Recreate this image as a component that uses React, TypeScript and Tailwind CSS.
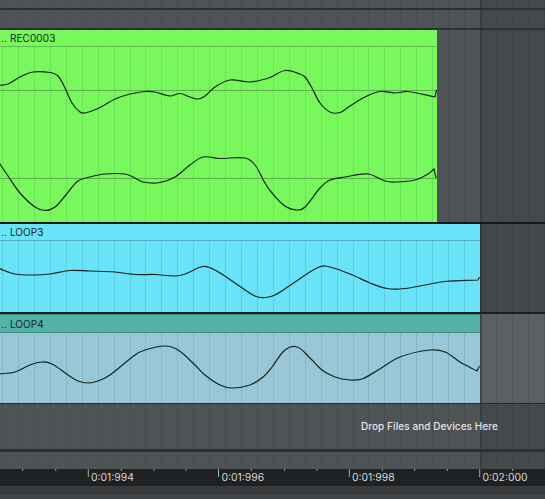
const FONT = "font-['Inter','Liberation_Sans',sans-serif]";

type Pt = [number, number];

const recTop: Pt[] = [[-2,85.5],[8,84],[20,77],[33,72],[50,72.5],[58,76],[65,88],[72,103],[80,112],[85,113],[98,108.5],[115,99],[130,94],[145,91.5],[155,92],[170,96],[180,93.5],[190,97],[198,99],[205,96],[215,87],[230,80],[250,82],[270,77.5],[285,70.5],[300,74],[305,77],[312,88],[320,103],[330,112],[340,112.5],[350,106],[365,97],[380,91.5],[395,93],[408,91.5],[435,97],[436.5,90]];
const recBottom: Pt[] = [[-2,161],[8,176],[20,193],[35,207],[45,210.5],[55,207],[65,196],[78,181],[90,177],[105,174],[125,174],[133,177],[143,182],[160,182.5],[175,177],[190,165],[203,157],[220,158.5],[245,158],[255,165],[265,183],[272,193],[285,206],[297,210],[305,207],[320,188],[330,180],[345,177],[368,174],[385,181],[395,182],[415,180],[428,174],[434,169],[436,178]];
const loop3: Pt[] = [[-2,268],[15,274],[35,275],[50,274],[70,270.5],[90,271],[115,272],[135,274.5],[155,274.5],[175,276],[185,274],[203,266.5],[215,270],[235,283],[255,296],[265,297.5],[275,295],[295,282],[315,269],[325,266],[350,274],[370,283],[387,288.5],[405,288.5],[425,285],[445,281.5],[478,280],[479.5,277]];
const loop4: Pt[] = [[-2,374],[15,372],[30,365],[42,362],[52,364],[68,375],[78,381],[88,383],[98,381],[110,375],[135,355],[145,350],[165,346],[178,350],[195,365],[205,375],[220,385],[232,388],[250,385],[263,377],[272,367],[285,350],[297,347],[310,358],[322,370],[335,377],[350,380],[362,379],[378,370],[400,357],[430,350],[445,352],[460,362],[477,371],[479.5,366]];

// smooth curve through the samples, last segment stays straight (clip end hook)
function smooth(pts: Pt[]) {
  const tangent = (i: number): Pt => {
    const a = pts[Math.max(i - 1, 0)];
    const c = pts[Math.min(i + 1, pts.length - 1)];
    const len = Math.hypot(c[0] - a[0], c[1] - a[1]) || 1;
    return [(c[0] - a[0]) / len, (c[1] - a[1]) / len];
  };
  let d = `M${pts[0][0]} ${pts[0][1]}`;
  for (let i = 0; i < pts.length - 2; i++) {
    const b = pts[i];
    const c = pts[i + 1];
    const seg = Math.hypot(c[0] - b[0], c[1] - b[1]) / 3;
    const t1 = tangent(i);
    const t2 = i + 1 === pts.length - 2 ? [(c[0] - b[0]) / (seg * 3), (c[1] - b[1]) / (seg * 3)] : tangent(i + 1);
    d += ` C${(b[0] + t1[0] * seg).toFixed(1)} ${(b[1] + t1[1] * seg).toFixed(1)} ${(c[0] - t2[0] * seg).toFixed(1)} ${(c[1] - t2[1] * seg).toFixed(1)} ${c[0]} ${c[1]}`;
  }
  const end = pts[pts.length - 1];
  return `${d} L${end[0]} ${end[1]}`;
}

function Wave({ d, viewBox }: { d: string[]; viewBox: string }) {
  return (
    <svg className="absolute inset-0 h-full w-full" viewBox={viewBox}>
      {d.map((path) => (
        <path key={path} d={path} fill="none" stroke="#15241c" strokeWidth="1.2" />
      ))}
    </svg>
  );
}

function Sep({ className }: { className: string }) {
  return <div className={`bg-[#2e3133] ${className}`} />;
}

// gridded gray strip, same columns as the clips above it
function Lane({ className }: { className: string }) {
  return (
    <div className={`flex ${className}`}>
      <div className="w-[480px] bg-[repeating-linear-gradient(90deg,#4e5356_0,#4e5356_2.07px,#484c4f_2.07px,#484c4f_3.07px,#4e5356_3.07px,#4e5356_15.93px)]" />
      <div className="w-[2px] bg-[#3a3e40]" />
      <div className="flex-1 bg-[repeating-linear-gradient(90deg,#45494c_0,#45494c_13.9px,#3f4346_13.9px,#3f4346_14.9px,#45494c_14.9px,#45494c_15.93px)]" />
    </div>
  );
}

function ClipTitle({ name, className }: { name: string; className: string }) {
  return (
    <div className={`flex h-[17px] items-center whitespace-pre pl-px text-[10px] leading-none tracking-[0.1px] text-[#14241c] ${className}`}>
      .. {name}
    </div>
  );
}

const minorTicks = [22.7, 55.7, 121.3, 154, 186, 251.3, 284.7, 317, 382.3, 414.7, 447.3, 512.7];
const majorTicks = [88.3, 218.5, 349.3, 479.7];
const rulerLabels = ['0:01:994', '0:01:996', '0:01:998', '0:02:000'];

export default function App() {
  return (
    <div className={`h-[499px] w-[545px] overflow-hidden bg-[#4e5356] ${FONT}`}>
      <Lane className="h-[8px]" />
      <Sep className="h-[2px]" />
      <Lane className="h-[18px]" />
      <Sep className="h-[2px]" />

      {/* green clip */}
      <div className="flex h-[192px]">
        <div className="flex w-[437px] flex-col bg-[#78f85c]">
          <ClipTitle name="REC0003" className="border-b border-[#5fbd50]" />
          <div className="relative flex flex-1 flex-col bg-[repeating-linear-gradient(90deg,#78f85c_0,#78f85c_2.07px,#6be359_2.07px,#6be359_3.07px,#78f85c_3.07px,#78f85c_15.93px)]">
            <div className="flex flex-1 items-center">
              <div className="h-px w-full bg-[#5fb04e]" />
            </div>
            <div className="flex flex-1 items-center">
              <div className="h-px w-full bg-[#5fb04e]" />
            </div>
            <Wave d={[smooth(recTop), smooth(recBottom)]} viewBox="0 47 437 175" />
          </div>
        </div>
        <div className="w-[43px] bg-[repeating-linear-gradient(90deg,#4e5356_0,#4e5356_11.1px,#484c4f_11.1px,#484c4f_12.1px,#4e5356_12.1px,#4e5356_15.93px)]" />
        <div className="w-[2px] bg-[#3a3e40]" />
        <div className="flex-1 bg-[repeating-linear-gradient(90deg,#45494c_0,#45494c_13.9px,#3f4346_13.9px,#3f4346_14.9px,#45494c_14.9px,#45494c_15.93px)]" />
      </div>
      <div className="h-[2px] bg-[#18161c]" />

      {/* blue clip */}
      <div className="flex h-[88px]">
        <div className="flex w-[480px] flex-col bg-[#68e3f7]">
          <ClipTitle name="LOOP3" className="border-b border-[#52b2c4]" />
          <div className="relative flex-1 bg-[repeating-linear-gradient(90deg,#68e3f7_0,#68e3f7_2.07px,#5ecfe2_2.07px,#5ecfe2_3.07px,#68e3f7_3.07px,#68e3f7_15.93px)]">
            <Wave d={[smooth(loop3)]} viewBox="0 241 480 71" />
          </div>
        </div>
        <div className="w-[2px] bg-[#33373a]" />
        <div className="flex-1 bg-[repeating-linear-gradient(90deg,#44484a_0,#44484a_13.9px,#3e4244_13.9px,#3e4244_14.9px,#44484a_14.9px,#44484a_15.93px)]" />
      </div>
      <div className="h-[2px] bg-[#1c1e20]" />

      {/* teal clip */}
      <div className="flex h-[89px]">
        <div className="flex w-[480px] flex-col bg-[#9ac7d8]">
          <ClipTitle name="LOOP4" className="box-content border-y border-[#3d8d82] bg-[#52b3a6]" />
          <div className="relative flex-1 bg-[repeating-linear-gradient(90deg,#9ac7d8_0,#9ac7d8_2.07px,#89b5c5_2.07px,#89b5c5_3.07px,#9ac7d8_3.07px,#9ac7d8_15.93px)]">
            <Wave d={[smooth(loop4)]} viewBox="0 333 480 70" />
          </div>
        </div>
        <div className="w-[2px] bg-[#3f4345]" />
        <div className="flex-1 bg-[repeating-linear-gradient(90deg,#5a6063_0,#5a6063_13.9px,#505659_13.9px,#505659_14.9px,#5a6063_14.9px,#5a6063_15.93px)]" />
      </div>
      <div className="h-px bg-[#26282a]" />

      {/* drop zone */}
      <div className="relative">
        <Lane className="h-[45px]" />
        <div className="absolute inset-0 flex items-center justify-end pr-[47px]">
          <span className="text-[10px] font-medium tracking-[0.08px] text-[#e4e5e5]">
            Drop Files and Devices Here
          </span>
        </div>
      </div>
      <Sep className="h-[3px]" />
      <Lane className="h-[17px]" />

      {/* time ruler */}
      <div className="relative flex h-[17px] bg-[#1f2123] pl-[88px]">
        <svg className="absolute inset-0" width="545" height="17">
          {minorTicks.map((x) => (
            <line key={x} x1={x} x2={x} y1="0" y2="2" stroke="#a8a8a8" />
          ))}
          {majorTicks.map((x) => (
            <line key={x} x1={x} x2={x} y1="0" y2="8" stroke="#a8a8a8" />
          ))}
        </svg>
        {rulerLabels.map((label) => (
          <div key={label} className="w-[130.5px] shrink-0 pl-[3px] pt-[1.5px] text-[10.4px] leading-[14px] text-[#d6d6d6]">
            {label}
          </div>
        ))}
      </div>
      <div className="h-[9px] bg-[#393c3e]" />
      <div className="h-[4px] bg-[#424648]" />
    </div>
  );
}
